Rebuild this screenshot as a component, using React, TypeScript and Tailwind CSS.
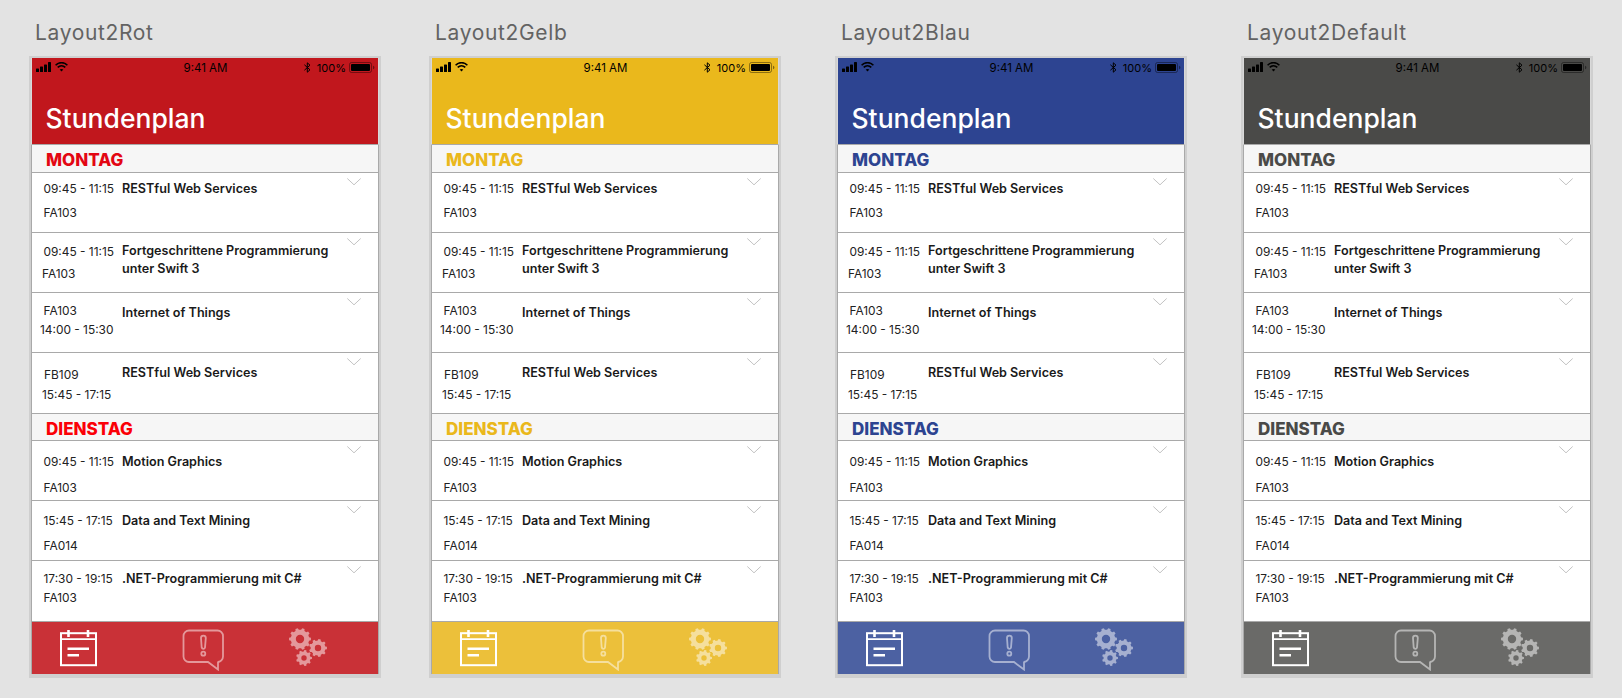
import React from "react";

function gearPath(cx: number, cy: number, r: number, teeth: number, depth: number): string {
  const pts: string[] = [];
  const step = (Math.PI * 2) / teeth;
  for (let i = 0; i < teeth; i++) {
    const a = i * step;
    const seq: [number, number][] = [
      [a - step * 0.3, r - depth],
      [a - step * 0.18, r],
      [a + step * 0.18, r],
      [a + step * 0.3, r - depth],
    ];
    for (const [an, ra] of seq) {
      pts.push(`${(cx + Math.cos(an) * ra).toFixed(2)} ${(cy + Math.sin(an) * ra).toFixed(2)}`);
    }
  }
  return "M" + pts.join("L") + "Z";
}

function hole(cx: number, cy: number, r: number): string {
  return `M${cx - r} ${cy}a${r} ${r} 0 1 0 ${2 * r} 0a${r} ${r} 0 1 0 ${-2 * r} 0Z`;
}

function Gears() {
  const d = [
    gearPath(12, 12, 11, 10, 1.8) + hole(12, 12, 4.2),
    gearPath(30, 21, 9, 9, 1.6) + hole(30, 21, 3.2),
    gearPath(16, 31, 8, 9, 1.5) + hole(16, 31, 2.7),
  ];
  return (
    <svg width="40" height="42" viewBox="0 0 40 42" className="ml-[62px] mt-[5px] shrink-0 opacity-50">
      {d.map((p, i) => (
        <path key={i} d={p} fill="#fff" fillRule="evenodd" />
      ))}
    </svg>
  );
}

function CalendarIcon() {
  return (
    <svg width="38" height="37" viewBox="0 0 38 37" className="mt-[8px] shrink-0" fill="none" stroke="#fff">
      <rect x="1" y="3.2" width="35" height="32" strokeWidth="2" />
      <path d="M1 9.2H36" strokeWidth="1.7" />
      <path d="M8.5 0V7M28 0V7" strokeWidth="2.6" />
      <path d="M7.5 18.7H29M7.5 25.3H19" strokeWidth="2.4" />
    </svg>
  );
}

function BubbleIcon() {
  return (
    <svg width="44" height="42" viewBox="0 0 44 42" className="ml-[84px] mt-[7px] shrink-0 opacity-50" fill="none" stroke="#fff" strokeWidth="1.8">
      <path d="M7 1.5H35.5a5.5 5.5 0 0 1 5.5 5.5V27.5a5.5 5.5 0 0 1 -5.5 5.5H36V40.5L26 33H7a5.5 5.5 0 0 1 -5.5 -5.5V7A5.5 5.5 0 0 1 7 1.5Z" />
      <path d="M19 9a2.4 2.4 0 0 1 4.8 0L23 18.5a1.7 1.7 0 0 1 -3.3 0Z" />
      <circle cx="21.3" cy="24.7" r="2" />
    </svg>
  );
}

function ChevronIcon() {
  return (
    <svg width="14" height="8" viewBox="0 0 14 8" fill="none" stroke="#b4b4b4" strokeWidth="0.8" className="absolute top-[5px] right-[17px]">
      <path d="M0.3 0.5L7 6.8L13.7 0.5" />
    </svg>
  );
}

function StatusBar() {
  return (
    <div className="flex h-[18px] items-center text-black">
      <div className="flex flex-1 items-center pl-[4px]">
        <svg width="16" height="10" viewBox="0 0 16 10" fill="#000">
          <rect x="0" y="6.5" width="3" height="3.5" rx="0.6" />
          <rect x="4" y="4.5" width="3" height="5.5" rx="0.6" />
          <rect x="8" y="2.5" width="3" height="7.5" rx="0.6" />
          <rect x="12" y="0" width="3" height="10" rx="0.6" />
        </svg>
        <svg width="13" height="10" viewBox="0 0 13 10" fill="none" stroke="#000" strokeWidth="1.6" className="ml-[3px]">
          <path d="M0.6 3.2C4 -0.2 9 -0.2 12.4 3.2" />
          <path d="M2.7 5.4C4.9 3.3 8.1 3.3 10.3 5.4" />
          <path d="M6.5 9.6L4.7 7.6C5.7 6.7 7.3 6.7 8.3 7.6Z" fill="#000" stroke="none" />
        </svg>
      </div>
      <div className="pt-[1px] text-[11.5px] font-normal leading-[18px]">9:41 AM</div>
      <div className="flex flex-1 items-center justify-end pr-[3px]">
        <svg width="7" height="11" viewBox="0 0 7 11" fill="none" stroke="#000" strokeWidth="1" className="mr-[6px]">
          <path d="M0.4 2.8L6 7.8L3.3 10.2V0.8L6 3.2L0.4 8.2" />
        </svg>
        <span className="pt-[1px] text-[11px] leading-[18px]">100%</span>
        <svg width="26" height="11" viewBox="0 0 26 11" className="ml-[3px]">
          <rect x="0.5" y="0.5" width="22" height="10" rx="2" fill="none" stroke="#000" strokeOpacity="0.4" />
          <rect x="2" y="2" width="19" height="7" rx="1" fill="#000" />
          <path d="M24 3.8C25 4.1 25.4 4.8 25.4 5.5C25.4 6.2 25 6.9 24 7.2Z" fill="#000" fillOpacity="0.45" />
        </svg>
      </div>
    </div>
  );
}

type RowData = {
  pt: string;
  h: string;
  first: string;
  second: string;
  firstCls: string;
  secondCls: string;
  titlePt: string;
  title: React.ReactNode;
};

const firstDay: RowData[] = [
  { pt: "pt-[7px]", h: "h-[60px]", first: "09:45 - 11:15", second: "FA103", firstCls: "ml-[11.5px]", secondCls: "ml-[11.5px] mt-[6px]", titlePt: "pt-[6.5px]", title: "RESTful Web Services" },
  { pt: "pt-[10px]", h: "h-[60px]", first: "09:45 - 11:15", second: "FA103", firstCls: "ml-[11.5px]", secondCls: "ml-[10px] mt-[4px]", titlePt: "pt-[8.5px]", title: <>Fortgeschrittene Programmierung<br />unter Swift 3</> },
  { pt: "pt-[9px]", h: "h-[60px]", first: "FA103", second: "14:00 - 15:30", firstCls: "ml-[11.5px]", secondCls: "ml-[8px] mt-[1px]", titlePt: "pt-[10.5px]", title: "Internet of Things" },
  { pt: "pt-[13px]", h: "h-[61px]", first: "FB109", second: "15:45 - 17:15", firstCls: "ml-[12px]", secondCls: "ml-[10px] mt-[2px]", titlePt: "pt-[10.5px]", title: "RESTful Web Services" },
];

const secondDay: RowData[] = [
  { pt: "pt-[12px]", h: "h-[60px]", first: "09:45 - 11:15", second: "FA103", firstCls: "ml-[11.5px]", secondCls: "ml-[11.5px] mt-[8px]", titlePt: "pt-[11.5px]", title: "Motion Graphics" },
  { pt: "pt-[11px]", h: "h-[60px]", first: "15:45 - 17:15", second: "FA014", firstCls: "ml-[11.5px]", secondCls: "ml-[11.5px] mt-[7px]", titlePt: "pt-[10.5px]", title: "Data and Text Mining" },
  { pt: "pt-[9px]", h: "h-[61px]", first: "17:30 - 19:15", second: "FA103", firstCls: "ml-[11.5px]", secondCls: "ml-[11.5px] mt-[1px]", titlePt: "pt-[8.5px]", title: ".NET-Programmierung mit C#" },
];

function Row({ r }: { r: RowData }) {
  return (
    <div className={`relative flex border-x border-b border-[#a9a9a9] bg-white text-[#1a1a1a] ${r.h}`}>
      <div className={`w-[90px] shrink-0 whitespace-nowrap text-[11.9px] leading-[18px] text-[#222] ${r.pt}`}>
        <div className={r.firstCls}>{r.first}</div>
        <div className={r.secondCls}>{r.second}</div>
      </div>
      <div className={`whitespace-nowrap text-[12.6px] font-semibold leading-[18px] ${r.titlePt}`}>{r.title}</div>
      <ChevronIcon />
    </div>
  );
}

function DayHeader({ label, cls, h }: { label: string; cls: string; h: string }) {
  return (
    <div className={`flex items-center border-x border-b border-[#a9a9a9] bg-[#f6f6f6] pl-[14px] text-[17px] font-extrabold leading-[22px] ${h} ${cls}`}>
      {label}
    </div>
  );
}

function Phone({ name, col, head, tab, day, day2 }: { name: string; col: string; head: string; tab: string; day: string; day2: string }) {
  return (
    <div className={`w-[352px] shrink-0 ${col}`}>
      <div className="h-[56px] pl-[6px] pt-[19px] text-[21px] leading-[28px] tracking-[0.65px] text-[#636363]">{name}</div>
      <div className="border-x-2 border-t-2 border-b-4 border-[#cfcfcf]">
        <div className={`h-[87px] border-x border-b border-[#d9d9d9] border-b-[#a9a9a9] ${head}`}>
          <StatusBar />
          <div className="mt-[26px] pl-[13.5px] text-[26.5px] font-medium leading-[32px] text-white">Stundenplan</div>
        </div>
        <DayHeader label="MONTAG" cls={`pt-[2px] ${day}`} h="h-[28px]" />
        {firstDay.map((r, i) => (
          <Row key={i} r={r} />
        ))}
        <DayHeader label="DIENSTAG" cls={`pt-[3px] ${day2}`} h="h-[27px]" />
        {secondDay.map((r, i) => (
          <Row key={i} r={r} />
        ))}
        <div className={`flex h-[52px] items-start border-x border-[#a9a9a9] pl-[28px] ${tab}`}>
          <CalendarIcon />
          <BubbleIcon />
          <Gears />
        </div>
      </div>
    </div>
  );
}

export default function App() {
  return (
    <div className="flex h-[698px] w-[1622px] overflow-hidden bg-[#e3e3e3] pl-[29px] font-['Inter','Liberation_Sans',sans-serif]">
      <Phone name="Layout2Rot" col="" head="bg-[#c1171d]" tab="bg-[#c93137]" day="text-[#e30613]" day2="text-[#fb0007]" />
      <Phone name="Layout2Gelb" col="ml-[48px]" head="bg-[#eab81c]" tab="bg-[#ecc03a]" day="text-[#eab81c]" day2="text-[#eab81c]" />
      <Phone name="Layout2Blau" col="ml-[54px]" head="bg-[#2d4491]" tab="bg-[#4c61a2]" day="text-[#2d4491]" day2="text-[#2d4491]" />
      <Phone name="Layout2Default" col="ml-[54px]" head="bg-[#4a4a48]" tab="bg-[#6a6a68]" day="text-[#4a4a48]" day2="text-[#4a4a48]" />
    </div>
  );
}
